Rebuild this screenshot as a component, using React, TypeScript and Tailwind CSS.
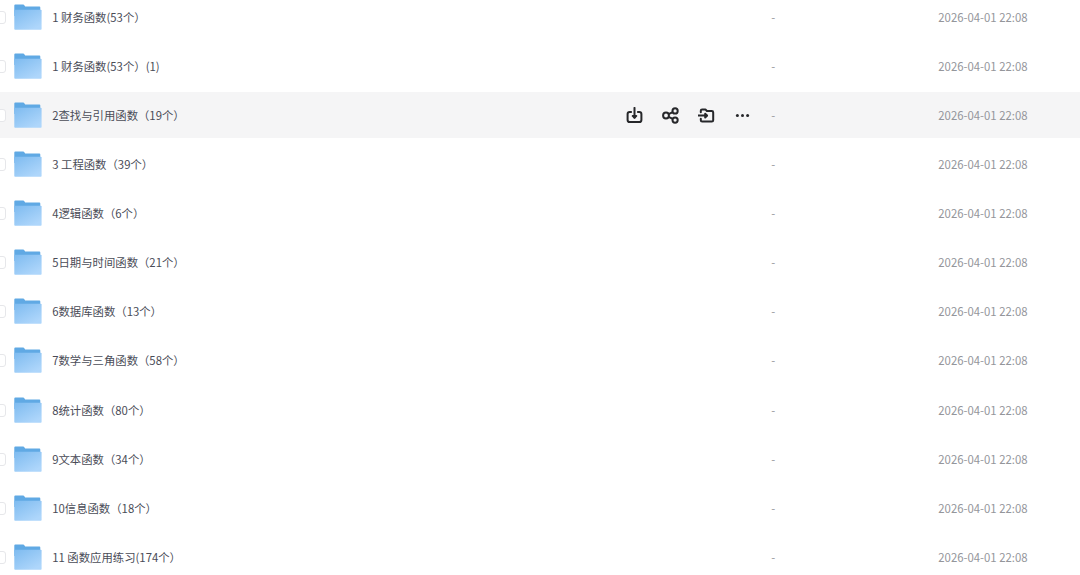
interface FileEntry {
  name: string;
  size: string;
  modified: string;
  hovered?: boolean;
}

const MODIFIED = "2026-04-01 22:08";

const FILES: FileEntry[] = [
  { name: "1 财务函数(53个）", size: "-", modified: MODIFIED },
  { name: "1 财务函数(53个）(1)", size: "-", modified: MODIFIED },
  { name: "2查找与引用函数（19个）", size: "-", modified: MODIFIED, hovered: true },
  { name: "3 工程函数（39个）", size: "-", modified: MODIFIED },
  { name: "4逻辑函数（6个）", size: "-", modified: MODIFIED },
  { name: "5日期与时间函数（21个）", size: "-", modified: MODIFIED },
  { name: "6数据库函数（13个）", size: "-", modified: MODIFIED },
  { name: "7数学与三角函数（58个）", size: "-", modified: MODIFIED },
  { name: "8统计函数（80个）", size: "-", modified: MODIFIED },
  { name: "9文本函数（34个）", size: "-", modified: MODIFIED },
  { name: "10信息函数（18个）", size: "-", modified: MODIFIED },
  { name: "11 函数应用练习(174个）", size: "-", modified: MODIFIED },
];

function FolderIcon() {
  return (
    <svg className="h-[26px] w-7 shrink-0" viewBox="0 0 28 26" fill="none">
      <defs>
        <linearGradient id="folder-front" x1="6" y1="4" x2="18" y2="26" gradientUnits="userSpaceOnUse">
          <stop stopColor="#80bcf0" />
          <stop offset="1" stopColor="#aed6fb" />
        </linearGradient>
      </defs>
      <path d="M.3 1.6Q.3.6 1.3.6H9.2Q9.9.6 10.3 1.2L11.2 2.6H25.4Q26.3 2.6 26.3 3.5V12H.3Z" fill="#60a9e4" />
      <path d="M.3 5.7H26.7Q27.6 5.7 27.6 6.6V24.9Q27.6 25.7 26.8 25.7H1.1Q.3 25.7.3 24.9Z" fill="url(#folder-front)" />
    </svg>
  );
}

const ICON = "size-[18px] shrink-0";

function RowActions() {
  return (
    <div className="flex items-center gap-[18px] pl-px pt-[2px] text-[#26272a]">
      {/* download */}
      <svg className={ICON} viewBox="0.5 0.5 18 18" fill="none" stroke="currentColor" strokeWidth="2" strokeLinecap="round" strokeLinejoin="round">
        <path d="M5.6 5.4H4.2Q2.1 5.4 2.1 7.5V13.5Q2.1 15.6 4.2 15.6H13.8Q15.9 15.6 15.9 13.5V7.5Q15.9 5.4 13.8 5.4H12.4" />
        <path d="M9 1.4V11" />
        <path d="M7.2 9.4L9 11.2L10.8 9.4Z" fill="currentColor" />
      </svg>
      {/* share */}
      <svg className={ICON} viewBox="0.5 0.5 18 18" fill="none" stroke="currentColor" strokeWidth="2">
        <circle cx="4.5" cy="9" r="2.9" />
        <circle cx="13.6" cy="4.4" r="2.6" />
        <circle cx="13.6" cy="13.6" r="2.6" />
        <path d="M7 7.7L11.3 5.6M7 10.3L11.3 12.4" />
      </svg>
      {/* move to folder */}
      <svg className={ICON} viewBox="1.2 0.5 18 18" fill="none" stroke="currentColor" strokeWidth="2" strokeLinecap="round" strokeLinejoin="round">
        <path d="M4 5.8V4.2Q4 2.9 5.3 2.9H8.6L10.1 4.5H15Q16.4 4.5 16.4 5.9V13.7Q16.4 15.1 15 15.1H5.4Q4 15.1 4 13.7V12.3" />
        <path d="M1.3 9.1H10" />
        <path d="M8.4 7.2L10.3 9.1L8.4 11Z" fill="currentColor" />
      </svg>
      {/* more */}
      <svg className={ICON} viewBox="0.5 0.5 18 18" fill="currentColor">
        <circle cx="3.9" cy="9" r="1.5" />
        <circle cx="9" cy="9" r="1.5" />
        <circle cx="14.1" cy="9" r="1.5" />
      </svg>
    </div>
  );
}

function FileRow({ file }: { file: FileEntry }) {
  return (
    <div className={`flex h-[45.6px] shrink-0 items-center ${file.hovered ? "bg-[#f5f5f6]" : "bg-white"}`}>
      <div className="-ml-[7px] mt-px h-[13px] w-[13px] shrink-0 rounded-[3px] border border-[#e6e7ea] bg-white" />
      <div className="ml-2">
        <FolderIcon />
      </div>
      <div className="ml-[10.2px] w-[572.8px] whitespace-pre text-[#4a4c57]">{file.name}</div>
      <div className="w-[146.3px]">{file.hovered && <RowActions />}</div>
      <div className="w-[167px] text-[#94969b]">{file.size}</div>
      <div className="whitespace-nowrap text-[#94969b]">{file.modified}</div>
    </div>
  );
}

export default function App() {
  return (
    <div className="h-[575px] w-[1080px] overflow-hidden bg-white font-['Noto_Sans_CJK_SC',sans-serif] text-[11.36px] leading-4">
      <div className="-mt-[6px] flex flex-col gap-[3.5px]">
        {FILES.map((file) => (
          <FileRow key={file.name} file={file} />
        ))}
      </div>
    </div>
  );
}
